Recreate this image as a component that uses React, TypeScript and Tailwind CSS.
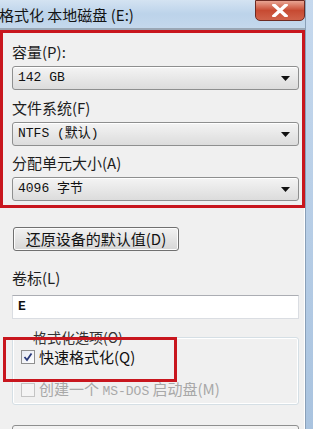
import React from 'react';

const cjk = '"Noto Sans CJK SC", "Noto Sans", sans-serif';
const mono = '"Liberation Mono", "Noto Sans CJK SC", monospace';

function Arrow() {
  return (
    <svg width="9" height="5" viewBox="0 0 9 5" className="shrink-0">
      <path d="M0 0 H9 L4.5 5 Z" fill="#111" />
    </svg>
  );
}

function Combo({ value }: { value: string }) {
  return (
    <div className="h-[24px] mr-[5px] flex items-center justify-between pl-[5px] pr-[8px] rounded-[3px] border border-[#8e8f8f] bg-gradient-to-b from-[#f4f4f4] to-[#dcdcdc] shadow-[inset_0_1px_0_#ffffff]">
      <span className="text-[13px] text-[#111]" style={{ fontFamily: mono }}>{value}</span>
      <Arrow />
    </div>
  );
}

function Label({ text, className = '' }: { text: string; className?: string }) {
  return (
    <div className={`h-[20px] leading-[20px] text-[15px] text-[#1e1e1e] ${className}`} style={{ fontFamily: cjk }}>
      {text}
    </div>
  );
}

export default function App() {
  return (
    <div className="relative w-[313px] h-[429px] overflow-hidden flex bg-[#f0f0f0]">
      <div className="w-[305px] flex flex-col">
        {/* Title bar */}
        <div className="h-[30px] shrink-0 flex items-start justify-between bg-gradient-to-b from-[#d4e3f2] via-[#bcd3ea] to-[#c4d8ec] border-b-[2px] border-[#9aa7b5]">
          <span className="mt-[5px] -ml-[1px] text-[15px] text-[#141414] leading-[20px]" style={{ fontFamily: cjk }}>
            格式化 本地磁盘 (E:)
          </span>
          <div className="w-[50px] h-[21px] flex items-center justify-center rounded-b-[5px] border border-[#6d2a22] bg-gradient-to-b from-[#e8a493] via-[#c74a32] to-[#d0624a]">
            <svg width="16" height="13" viewBox="0 0 16 13">
              <path d="M2 1 L14 12 M14 1 L2 12" stroke="#ffffff" strokeWidth="3.4" strokeLinecap="square" />
            </svg>
          </div>
        </div>

        {/* Body */}
        <div className="flex-1 pl-[12px] bg-[#f0f0f0] border-r border-[#ffffff]">
          <Label text="容量(P):" className="mt-[12px] mb-[4px]" />
          <Combo value="142 GB" />
          <Label text="文件系统(F)" className="mt-[8px] mb-[4px]" />
          <Combo value="NTFS (默认)" />
          <Label text="分配单元大小(A)" className="mt-[7px] mb-[4px]" />
          <Combo value="4096 字节" />

          <button className="mt-[26px] h-[24px] w-[166px] ml-[1px] rounded-[3px] border border-[#707070] bg-gradient-to-b from-[#f2f2f2] to-[#d6d6d6] text-[15px] text-[#111] leading-[20px] shadow-[inset_0_0_0_1px_#fcfcfc]" style={{ fontFamily: cjk }}>
            还原设备的默认值(D)
          </button>

          <Label text="卷标(L)" className="mt-[17px] mb-[7px]" />
          <div className="h-[24px] mr-[5px] flex items-center pl-[5px] bg-white border border-[#dadde2] border-t-[#abadb3]">
            <span className="text-[13px] font-bold text-[#111]" style={{ fontFamily: mono }}>E</span>
          </div>

          <fieldset className="mt-[11px] mr-[5px] h-[75px] border border-[#d5dfe5] rounded-[3px] pl-[8px] shadow-[inset_0_0_0_1px_#ffffff]">
            <legend className="ml-[10px] px-[2px] text-[14px] leading-[14px] text-[#333]" style={{ fontFamily: cjk }}>
              格式化选项(O)
            </legend>
            <div className="flex items-center gap-[4px] mt-[3px] h-[20px]">
              <div className="w-[14px] h-[14px] border border-[#8f8f8f] bg-gradient-to-br from-[#e6e9f2] to-[#ffffff] flex items-center justify-center">
                <svg width="10" height="10" viewBox="0 0 10 10">
                  <path d="M1.5 5 L4 8 L8.5 1.5" stroke="#2a3a7a" strokeWidth="1.8" fill="none" />
                </svg>
              </div>
              <span className="text-[15px] text-[#111] leading-[20px]" style={{ fontFamily: cjk }}>快速格式化(Q)</span>
            </div>
            <div className="flex items-center gap-[4px] mt-[13px] h-[20px]">
              <div className="w-[14px] h-[14px] border border-[#c4c4c4] bg-[#f4f4f4]" />
              <span className="text-[15px] text-[#a8a8a8] leading-[20px]" style={{ fontFamily: cjk }}>
                创建一个 <span style={{ fontFamily: mono }} className="text-[13px]">MS-DOS</span> 启动盘(M)
              </span>
            </div>
          </fieldset>

          <div className="mt-[20px] mr-[5px] h-[30px] rounded-[3px] border border-[#8e8f8f] bg-gradient-to-b from-[#f4f4f4] to-[#dedede]" />
        </div>
      </div>

      {/* Right window frame */}
      <div className="w-[8px] bg-gradient-to-b from-[#c6d9ee] to-[#a9c3df] border-l border-[#8aa0b8]" />

      {/* Red highlight frames */}
      <div className="absolute left-0 top-[30px] w-[305px] h-[178px] border-[3px] border-[#c8161e]" />
      <div className="absolute left-[3px] top-[337px] w-[174px] h-[45px] border-[3px] border-[#c8161e]" />
    </div>
  );
}
